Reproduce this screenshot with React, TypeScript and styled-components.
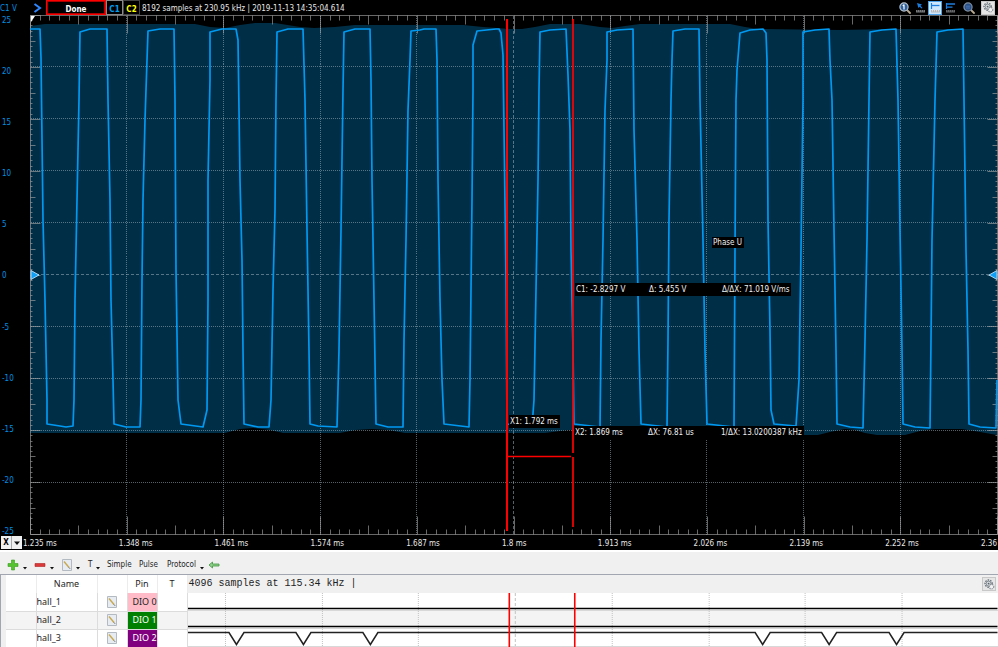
import React from "react";
import styled, { createGlobalStyle, css } from "styled-components";

const uiFont = `"DejaVu Sans Condensed", "DejaVu Sans", sans-serif`;
const tableFont = `"Noto Sans", "Open Sans", sans-serif`;
const monoFont = `"Liberation Mono", "DejaVu Sans Mono", monospace`;

const GlobalStyle = createGlobalStyle`
  * { box-sizing: border-box; }
  html, body { margin: 0; background: #f0f0f0; }
  body { font: 8px/12px ${uiFont}; color: #e8e8e8; overflow: hidden; }
  button { font: inherit; color: inherit; padding: 0; margin: 0; border: 0; background: none; cursor: pointer; }
  svg { display: block; }
`;

const Page = styled.div`
  display: flex;
  flex-direction: column;
`;

const Scope = styled.section`
  background: #000;
`;

const TopBar = styled.header`
  display: flex;
  align-items: center;
  height: 15px;
  line-height: 14px;
  white-space: nowrap;
`;

const ChannelUnit = styled.span`
  width: 33px;
  padding-top: 2px;
  color: #0090e0;
`;

const RunIcon = styled.span`
  width: 13px;
`;

const DoneButton = styled.button`
  width: 60px;
  height: 15px;
  padding-top: 2px;
  border: 1px solid #f00;
  box-shadow: inset 0 0 0 1px #a00;
  color: #fff;
  font-weight: bold;
`;

const ChannelButton = styled.button<{ $color: string; $active?: boolean }>`
  width: 17px;
  height: 15px;
  padding-top: 2px;
  border: 1px solid ${(p) => (p.$active ? "#8a8a8a" : "#444")};
  color: ${(p) => p.$color};
  font-weight: bold;
`;

const SampleInfo = styled.span`
  flex: 1;
  padding: 2px 0 0 2px;
`;

const TopTools = styled.div`
  display: flex;
  align-items: center;
  gap: 1px;
  padding-right: 3px;
`;

const ToolButton = styled.button<{ $look?: "selected" | "plain" }>`
  display: flex;
  align-items: center;
  justify-content: center;
  width: 14px;
  height: 14px;
  ${(p) =>
    p.$look === "selected" &&
    css`
      background: #cfe6fb;
      border: 1px solid #4da0ea;
    `}
  ${(p) =>
    p.$look === "plain" &&
    css`
      background: #e6e6e6;
      border: 1px solid #c8c8c8;
    `}
`;

const ToolGap = styled.span`
  width: 3px;
`;

const PlotRow = styled.div`
  display: grid;
  grid-template-columns: 30px minmax(0, 1fr);
`;

const VoltAxis = styled.div`
  display: flex;
  flex-direction: column;
  justify-content: space-between;
  color: #0090e0;
  padding-left: 2px;
  height: 523px;
  margin-bottom: -3px;
`;

const Plot = styled.div`
  position: relative;
  overflow: hidden;
  > svg { width: 100%; height: 520px; }
`;

const Readout = styled.div<{ $x: number; $y: number; $columns?: boolean }>`
  position: absolute;
  left: ${(p) => ((p.$x - 30) / 968) * 100}%;
  top: ${(p) => p.$y - 15}px;
  display: grid;
  grid-template-columns: ${(p) => (p.$columns ? "73px 73px auto" : "auto")};
  padding: 1px 2px 0 1px;
  background: #000;
  color: #f0f0f0;
  white-space: nowrap;
`;

const Note = styled(Readout)`
  line-height: 10px;
`;

const TimeAxis = styled.div`
  display: flex;
  align-items: center;
  height: 15px;
  padding-left: 1px;
`;

const AxisSelect = styled.div`
  display: flex;
  width: 21px;
  height: 13px;
  margin-right: 1px;
  background: #f0f0f0;
  color: #000;
`;

const AxisButton = styled.button<{ $divided?: boolean }>`
  flex: 1;
  display: flex;
  align-items: center;
  justify-content: center;
  padding-top: 1px;
  font-weight: bold;
  border-left: ${(p) => (p.$divided ? "1px solid #aaa" : "0")};
`;

const Tick = styled.span<{ $grow: number }>`
  flex: ${(p) => p.$grow} 1 0;
  min-width: 0;
  padding-top: 2px;
  white-space: nowrap;
`;

const LogicToolbar = styled.nav`
  display: flex;
  align-items: center;
  height: 25px;
  padding: 3px 0 0 7px;
  border-top: 2px solid #fff;
  border-bottom: 1px solid #a2a6b0;
  color: #1e1e1e;
`;

const MenuButton = styled.button<{ $w: number }>`
  display: flex;
  align-items: center;
  gap: 4px;
  width: ${(p) => p.$w}px;
  height: 14px;
  white-space: nowrap;
  > svg:last-child { flex: none; }
`;

const LogicPanel = styled.section`
  padding-left: 5px;
  border-left: 1px solid #a2a6b0;
  color: #1e1e1e;
  font: 9px/12px ${tableFont};
`;

const LogicTable = styled.table`
  width: 100%;
  table-layout: fixed;
  border-collapse: collapse;
  background: #fff;
`;

const HeadCell = styled.th`
  height: 18px;
  padding: 0;
  font-weight: normal;
  border-right: 1px solid #ececec;
`;

const TraceHead = styled.th`
  padding: 0 2px 0 1px;
  background: #f0f0f0;
  font: 10px/12px ${monoFont};
  text-align: left;
`;

const TraceHeadInner = styled.div`
  display: flex;
  justify-content: space-between;
  align-items: center;
`;

const SignalRow = styled.tr<{ $alt?: boolean }>`
  height: 18px;
  background: ${(p) => (p.$alt ? "#f4f4f4" : "#fff")};
`;

const Cell = styled.td<{ $bg?: string; $fg?: string }>`
  height: 18px;
  padding: 0;
  overflow: hidden;
  white-space: nowrap;
  background: ${(p) => p.$bg ?? "transparent"};
  color: ${(p) => p.$fg ?? "inherit"};
  text-indent: ${(p) => (p.$bg ? 5 : 0)}px;
  border-right: 1px solid #dcdcdc;
  border-bottom: 1px solid #dcdcdc;
  > button { margin: auto; display: block; }
`;

const TraceCell = styled.td`
  padding: 0;
  > svg { width: 100%; height: 18px; }
`;

const DownArrow = ({ size = 4 }: { size?: number }) => (
  <svg width={size} height={size} viewBox="0 0 4 4" aria-hidden>
    <path d="M0 1H4L2 3.4Z" fill="#111" />
  </svg>
);

const LowArrow = () => (
  <svg width="4" height="12" viewBox="0 0 4 12" aria-hidden>
    <path d="M0 8H4L2 10.5Z" fill="#111" />
  </svg>
);

const Magnifier = ({ one }: { one?: boolean }) => (
  <svg width="12" height="12" viewBox="0 0 12 12" aria-hidden>
    <path d="M8 8L11 11" stroke="#b8a890" strokeWidth="1.8" strokeLinecap="round" />
    <circle cx="5" cy="5" r="4.1" fill={one ? "#2c5f9c" : "#2a4f86"} stroke={one ? "#b9c4d0" : "#7f8fa3"} strokeWidth="1.2" />
    {one ? (
      <path d="M5 2.6V7.4M3.8 3.8L5 2.6" stroke="#fff" strokeWidth="1.2" fill="none" />
    ) : (
      <path d="M2.8 4.2H7.2M3 6H7" stroke="#4a78b8" strokeWidth=".9" />
    )}
  </svg>
);

const PointerRuler = () => (
  <svg width="11" height="12" viewBox="0 0 11 12" aria-hidden>
    <path d="M2 1L7 2.6L5.4 3.8L7.6 6L6.6 6.6L4.6 4.8L3.4 6Z" fill="#1c7fe0" />
    <path d="M1 8H10V10.5H1Z" fill="#77797c" />
    <path d="M2.5 8V9.5M4.5 8V9.5M6.5 8V9.5M8.5 8V9.5" stroke="#222" strokeWidth=".6" />
  </svg>
);

const BarsRuler = ({ light }: { light?: boolean }) => (
  <svg width="11" height="12" viewBox="0 0 11 12" aria-hidden>
    <path d="M1.5 1V7" stroke="#1c7fe0" strokeWidth="1.2" />
    <path d={light ? "M1.5 3.5H9.5" : "M1.5 2H10M1.5 5.2H7.5"} stroke="#1c7fe0" strokeWidth="1.3" />
    <path d="M1 8H10V10.5H1Z" fill={light ? "#b4b8bc" : "#66686b"} />
    <path d="M2.5 8V9.5M4.5 8V9.5M6.5 8V9.5M8.5 8V9.5" stroke={light ? "#fff" : "#222"} strokeWidth=".6" />
  </svg>
);

const Gear = () => (
  <svg width="11" height="11" viewBox="0 0 12 12" aria-hidden>
    <circle cx="5" cy="5" r="3.9" fill="none" stroke="#6f787f" strokeWidth="1.6" strokeDasharray="1.7 1.1" />
    <circle cx="5" cy="5" r="2.7" fill="#d5dadd" stroke="#7d868c" strokeWidth="1" />
    <circle cx="8.2" cy="8.4" r="2.5" fill="#f3f3f3" stroke="#8c9499" strokeWidth="1.3" strokeDasharray="1.4 .8" />
    <circle cx="5" cy="5" r="1" fill="#596268" />
  </svg>
);

const EditPage = () => (
  <svg width="10" height="12" viewBox="0 0 10 12" aria-hidden>
    <path d="M.5 .5H9.5V11.5H.5Z" fill="#e7ecf2" stroke="#b4bac1" />
    <path d="M2 2.5L7 8.5" stroke="#c9a94e" strokeWidth="1.4" />
    <path d="M7 8.5L8 9.7" stroke="#555" strokeWidth="1" />
  </svg>
);

const COLS = 10;
const DIV_X = 96.7;
const DIV_Y = 51.9;
const LEFT = 30.5;
const TOP = 15.5;
const RIGHT = 997.5;
const BOTTOM = 534.5;

const range = (n: number) => Array.from({ length: n }, (_, i) => i);

const topBottomTicks = range(COLS * 10 + 1)
  .map((i) => {
    const x = Math.floor(LEFT + (i * DIV_X) / 10) + 0.5;
    const len = i % 10 === 0 ? 18 : i % 5 === 0 ? 9 : 5;
    return `M${x} ${TOP}v${len}M${x} ${BOTTOM}v${-len}`;
  })
  .join("");

const sideTicks = range(101)
  .map((i) => {
    const y = Math.floor(TOP + (i * DIV_Y) / 10) + 0.5;
    const len = i % 10 === 0 ? 10 : i % 5 === 0 ? 5 : 2;
    return `M${LEFT} ${y}h${len}M${RIGHT} ${y}h${-len}`;
  })
  .join("");

const envelope =
  "30,26 45,24 195,24 210,27 225,28 240,25 255,23 275,23 300,27 314,28 335,27 355,25 463,25 483,27 510,29 522,29 535,27 550,24 580,24 600,27 612,28 625,26 640,24 730,24 745,27 758,29 840,30 890,29 997,29 " +
  "997,435 980,432 962,429 935,429 920,431 905,435 877,435 865,433 855,430 845,429 830,432 818,435 700,435 580,430 568,430 545,433 440,433 405,433 388,430 372,429 355,430 340,433 283,433 270,430 253,428 240,429 225,433 30,433";

const wave =
  "30,29 40,29 41,58 43,220 45,300 47,400 47,424 60,426 66,427 73,426 74,400 75,300 77,200 79,100 80,32 90,29 107,29 108,100 110,200 111,300 113,380 114,424 126,427 140,427 141,400 142,280 143,200 145,120 147,60 148,31 160,29 174,29 175,100 176,270 178,400 181,424 203,427 207,410 208,300 208,180 210,80 210,32 222,29 236,29 238,40 240,180 242,260 243,350 244,424 258,427 269,427 271,400 273,290 275,210 276,100 277,32 288,29 303,29 305,100 307,230 309,350 310,424 318,426 337,427 339,350 341,230 343,90 344,32 355,29 370,29 371,80 372,180 374,300 376,424 388,427 403,427 404,340 406,240 408,110 410,60 411,31 420,30 424,29 436,29 437,60 438,180 440,300 442,380 444,424 469,427 470,380 472,200 473,90 473,45 477,31 496,29 499,29 501,33 503,55 504,130 506,280 507,424 532,427 534,400 536,290 538,180 539,90 540,32 550,30 566,29 568,75 570,130 571,250 573,350 574,424 600,427 601,340 603,240 605,110 607,60 607,32 617,30 633,29 634,130 637,240 639,350 641,424 667,427 668,340 669,220 671,100 672,60 673,31 685,29 699,29 700,100 703,240 705,350 707,424 734,427 735,250 736,100 737,70 740,33 750,30 763,29 766,33 767,60 768,220 770,330 771,410 774,424 796,426 799,380 801,250 803,100 803,32 815,30 829,29 830,60 832,100 834,230 836,350 837,424 850,427 863,428 865,340 867,240 869,100 870,32 882,30 896,29 898,100 900,230 902,350 903,424 915,427 930,428 931,340 932,240 935,100 937,32 948,30 963,29 964,100 966,250 968,350 969,424 980,427 996,428 997,380";

function ScopePlot() {
  return (
    <svg viewBox="30 15 968 520" preserveAspectRatio="none" role="img" aria-label="Channel 1 waveform">
      <polygon points={envelope} fill="#002e46" />
      <g stroke="#9db1bb" strokeOpacity=".55" shapeRendering="crispEdges">
        {range(9).map((i) => (
          <path key={`v${i}`} d={`M${Math.floor(LEFT + (i + 1) * DIV_X - 0.5) + 0.5} ${TOP}V${BOTTOM}`} strokeDasharray={i === 4 ? "3 2" : "1 1"} />
        ))}
        {range(9).map((i) => (
          <path key={`h${i}`} d={`M${LEFT} ${Math.floor(TOP + (i + 1) * DIV_Y - 0.5) + 0.5}H${RIGHT}`} strokeDasharray={i === 4 ? "3 2" : "1 1"} />
        ))}
      </g>
      <g stroke="#a8a8a8" strokeOpacity=".62" fill="none">
        <path d={topBottomTicks} />
        <path d={sideTicks} />
        <path d={`M${LEFT} ${TOP}H${RIGHT}V${BOTTOM}H${LEFT}Z`} />
      </g>
      <polyline points={wave} fill="none" stroke="#0099f2" strokeWidth="1.7" strokeLinejoin="round" />
      <path d="M31 16H35L31 22Z" fill="#fff" />
      <path d="M31 270.500L39 275L31 279.500Z" fill="#10a0f5" stroke="#d8f0ff" strokeWidth=".8" />
      <path d="M997 270.500L989 275L997 279.500Z" fill="#10a0f5" stroke="#d8f0ff" strokeWidth=".8" />
      <g stroke="#f00" strokeWidth="2">
        <path d="M507 19V531" />
        <path d="M573 19V453M573 457V527" strokeWidth="1.700" />
        <path d="M507 456.500H571" strokeWidth="1.400" />
      </g>
    </svg>
  );
}

const traceGrid = range(8).map((i) => Math.floor(224.5 + i * 96.7) + 0.5);
const pulses = [235.5, 302.5, 369.5, 762, 828.5, 896];
const pulsePath = `M187 631.5${pulses.map((x) => `H${x - 7.5}L${x} 643.5L${x + 7.5} 631.5`).join("")}H997`;

function Trace({ index }: { index: number }) {
  const top = 592 + index * 18;
  return (
    <svg viewBox={`187 ${top} 811 18`} preserveAspectRatio="none" role="img" aria-label={`hall_${index + 1} trace`}>
      {traceGrid.map((x, i) => (
        <path key={x} d={`M${x} ${top}V${top + 18}`} stroke="#c2c2c2" strokeDasharray={i === 3 ? "3 2" : "1 1"} />
      ))}
      <path d={`M187 ${top + 17.5}H998`} stroke="#d8d8d8" />
      {index < 2 ? (
        <path d={`M187 ${top + 15.5}H997`} stroke="#000" strokeWidth="1.400" />
      ) : (
        <path d={pulsePath} fill="none" stroke="#222" strokeWidth="1.500" />
      )}
      <path d={`M508.500 ${top}V${top + 18}M574 ${top}V${top + 18}`} stroke="#f00" strokeWidth="1.600" />
    </svg>
  );
}

const volts = [25, 20, 15, 10, 5, 0, -5, -10, -15, -20, -25];
const times = ["1.235 ms", "1.348 ms", "1.461 ms", "1.574 ms", "1.687 ms", "1.8 ms", "1.913 ms", "2.026 ms", "2.139 ms", "2.252 ms", "2.36"];

const signals = [
  { name: "hall_1", pin: "DIO 0", bg: "#ffbcc8", fg: "#1e1e1e" },
  { name: "hall_2", pin: "DIO 1", bg: "#008000", fg: "#fff" },
  { name: "hall_3", pin: "DIO 2", bg: "#800080", fg: "#fff" },
];

export default function App() {
  return (
    <Page>
      <GlobalStyle />
      <Scope>
        <TopBar>
          <ChannelUnit>C1 V</ChannelUnit>
          <RunIcon>
            <svg width="9" height="10" viewBox="0 0 9 10" aria-hidden>
              <path d="M1.500 1L7 5L1.500 9" fill="none" stroke="#2f86ff" strokeWidth="2" />
            </svg>
          </RunIcon>
          <DoneButton>Done</DoneButton>
          <ChannelButton $color="#00a0f0" $active>C1</ChannelButton>
          <ChannelButton $color="#ffff00">C2</ChannelButton>
          <SampleInfo>8192 samples at 230.95 kHz | 2019-11-13 14:35:04.614</SampleInfo>
          <TopTools>
            <ToolButton aria-label="Zoom to one"><Magnifier one /></ToolButton>
            <ToolButton aria-label="Pointer"><PointerRuler /></ToolButton>
            <ToolButton aria-label="Measure" $look="selected"><BarsRuler light /></ToolButton>
            <ToolButton aria-label="Cursors"><BarsRuler /></ToolButton>
            <ToolGap />
            <ToolButton aria-label="Zoom"><Magnifier /></ToolButton>
            <ToolGap />
            <ToolButton aria-label="Plot settings" $look="plain"><Gear /></ToolButton>
          </TopTools>
        </TopBar>
        <PlotRow>
          <VoltAxis>
            {volts.map((v) => <span key={v}>{v}</span>)}
          </VoltAxis>
          <Plot>
            <ScopePlot />
            <Note $x={712} $y={237}>Phase U</Note>
            <Readout $x={575} $y={283} $columns>
              <span>C1: -2.8297 V</span><span>Δ: 5.455 V</span><span>Δ/ΔX: 71.019 V/ms</span>
            </Readout>
            <Readout $x={509} $y={415}>X1: 1.792 ms</Readout>
            <Readout $x={574} $y={426} $columns>
              <span>X2: 1.869 ms</span><span>ΔX: 76.81 us</span><span>1/ΔX: 13.0200387 kHz</span>
            </Readout>
          </Plot>
        </PlotRow>
        <TimeAxis>
          <AxisSelect>
            <AxisButton>X</AxisButton>
            <AxisButton $divided aria-label="Choose axis"><DownArrow size={6} /></AxisButton>
          </AxisSelect>
          {times.map((t, i) => <Tick key={t} $grow={i < 10 ? 96 : 17}>{t}</Tick>)}
        </TimeAxis>
      </Scope>
      <LogicToolbar>
        <MenuButton $w={27} aria-label="Add">
          <svg width="12" height="12" viewBox="0 0 12 12" aria-hidden>
            <path d="M4.500 1H7.500V4.500H11V7.500H7.500V11H4.500V7.500H1V4.500H4.500Z" fill="#55c22f" stroke="#389a1c" strokeWidth=".6" />
          </svg>
          <LowArrow />
        </MenuButton>
        <MenuButton $w={28} aria-label="Remove">
          <svg width="12" height="12" viewBox="0 0 12 12" aria-hidden>
            <path d="M1 4.500H11V7.500H1Z" fill="#dc3a3a" stroke="#b02222" strokeWidth=".6" />
          </svg>
          <LowArrow />
        </MenuButton>
        <MenuButton $w={26} aria-label="Edit"><EditPage /><LowArrow /></MenuButton>
        <MenuButton $w={19}>T<LowArrow /></MenuButton>
        <MenuButton $w={32}>Simple</MenuButton>
        <MenuButton $w={28}>Pulse</MenuButton>
        <MenuButton $w={41}>Protocol<LowArrow /></MenuButton>
        <MenuButton $w={12} aria-label="Back">
          <svg width="12" height="10" viewBox="0 0 12 10" aria-hidden>
            <path d="M1 5L4.500 2V4H11V6H4.500V8Z" fill="#8fd08a" stroke="#3f9440" strokeWidth=".8" />
          </svg>
        </MenuButton>
      </LogicToolbar>
      <LogicPanel>
        <LogicTable>
          <colgroup>
            <col style={{ width: 30 }} />
            <col style={{ width: 61 }} />
            <col style={{ width: 30 }} />
            <col style={{ width: 30 }} />
            <col style={{ width: 30 }} />
            <col />
          </colgroup>
          <thead>
            <tr>
              <HeadCell />
              <HeadCell>Name</HeadCell>
              <HeadCell />
              <HeadCell>Pin</HeadCell>
              <HeadCell>T</HeadCell>
              <TraceHead>
                <TraceHeadInner>
                  4096 samples at 115.34 kHz |
                  <ToolButton aria-label="Logic settings" $look="plain"><Gear /></ToolButton>
                </TraceHeadInner>
              </TraceHead>
            </tr>
          </thead>
          <tbody>
            {signals.map((s, i) => (
              <SignalRow key={s.name} $alt={i === 1}>
                <Cell />
                <Cell>{s.name}</Cell>
                <Cell><button aria-label={`Edit ${s.name}`}><EditPage /></button></Cell>
                <Cell $bg={s.bg} $fg={s.fg}>{s.pin}</Cell>
                <Cell />
                <TraceCell><Trace index={i} /></TraceCell>
              </SignalRow>
            ))}
          </tbody>
        </LogicTable>
      </LogicPanel>
    </Page>
  );
}
